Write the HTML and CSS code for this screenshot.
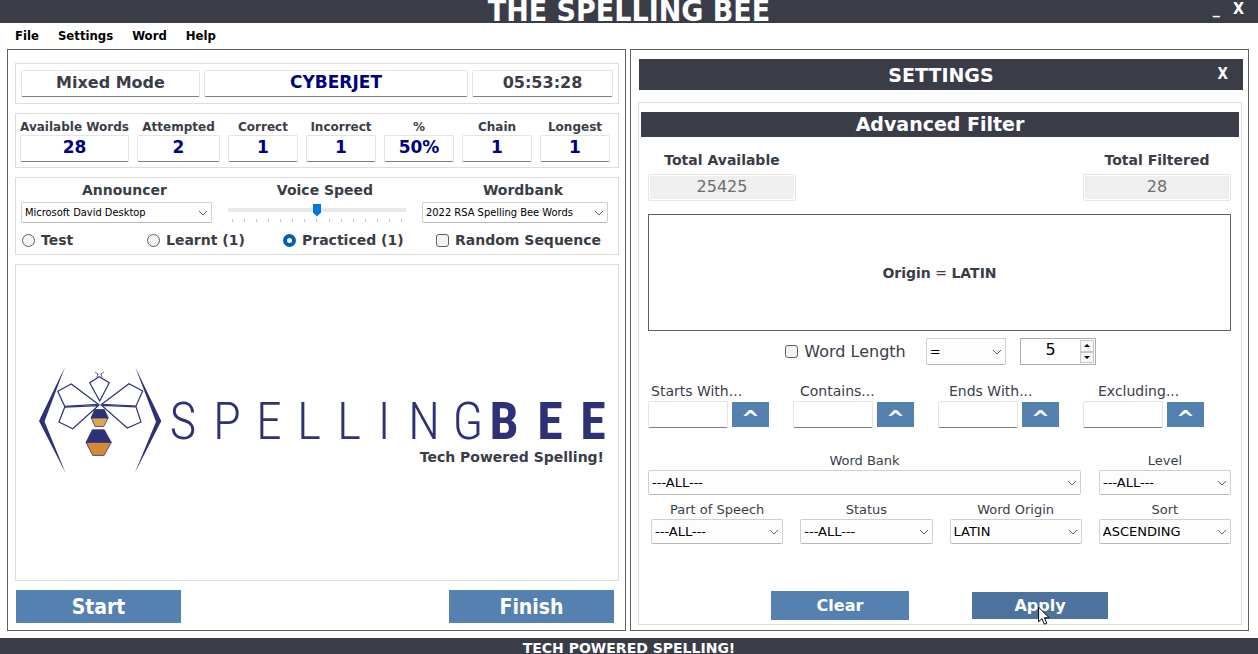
FILE: index.html
```html
<!DOCTYPE html>
<html lang="en">
<head>
<meta charset="utf-8">
<title>The Spelling Bee</title>
<link rel="stylesheet" href="styles.css">
</head>
<body>
<header class="titlebar">
  <h1 class="titlebar-title">THE SPELLING BEE</h1>
  <div class="window-buttons">
    <button type="button" class="window-button" aria-label="Minimize">_</button>
    <button type="button" class="window-button" aria-label="Close">X</button>
  </div>
</header>
<nav class="menu">
  <button type="button" class="menu-item">File</button>
  <button type="button" class="menu-item">Settings</button>
  <button type="button" class="menu-item">Word</button>
  <button type="button" class="menu-item">Help</button>
</nav>
<main class="panels">
  <section class="panel game">
    <div class="group status">
      <input class="field dark" type="text" readonly value="Mixed Mode" aria-label="Mode">
      <input class="field" type="text" readonly value="CYBERJET" aria-label="Player">
      <input class="field dark" type="text" readonly value="05:53:28" aria-label="Time">
    </div>
    <div class="group scores">
      <label class="score">Available Words<input class="field" type="text" readonly value="28"></label>
      <label class="score">Attempted<input class="field" type="text" readonly value="2"></label>
      <label class="score">Correct<input class="field" type="text" readonly value="1"></label>
      <label class="score">Incorrect<input class="field" type="text" readonly value="1"></label>
      <label class="score">%<input class="field" type="text" readonly value="50%"></label>
      <label class="score">Chain<input class="field" type="text" readonly value="1"></label>
      <label class="score">Longest<input class="field" type="text" readonly value="1"></label>
    </div>
    <div class="group voice">
      <div class="voice-row">
        <div class="voice-item">
          <label for="announcer">Announcer</label>
          <select id="announcer" class="select small"><option>Microsoft David Desktop</option></select>
        </div>
        <div class="voice-item">
          <label for="speed">Voice Speed</label>
          <div class="slider">
            <input id="speed" type="range" min="-7" max="7" value="0">
            <div class="ticks"><i></i><i></i><i></i><i></i><i></i><i></i><i></i><i></i><i></i><i></i><i></i><i></i><i></i><i></i><i></i></div>
          </div>
        </div>
        <div class="voice-item">
          <label for="wordbank">Wordbank</label>
          <select id="wordbank" class="select small"><option>2022 RSA Spelling Bee Words</option></select>
        </div>
      </div>
      <div class="mode-row">
        <label class="choice"><input type="radio" name="mode">Test</label>
        <label class="choice"><input type="radio" name="mode">Learnt (1)</label>
        <label class="choice"><input type="radio" name="mode" checked>Practiced (1)</label>
        <label class="choice"><input type="checkbox">Random Sequence</label>
      </div>
    </div>
    <div class="group logo-card">
      <svg class="logo" viewBox="16 365 602 115" role="img" aria-label="Spelling Bee">
        <g fill="#2e3175">
          <path d="M65 366.7 39 421l26.7 52.3L44.5 421.5z"/>
          <path d="M135.3 367.3 161.3 421l-26.6 52.3L156 421.7z"/>
        </g>
        <g fill="none" stroke="#2e3175" stroke-width="1.2">
          <path d="M98.3 404.3 71.3 384l-13.6 7.3 7 15z"/>
          <path d="M98.3 405.6 64.7 407.2 59 422l13.7 6.7z"/>
          <path d="M101.7 404.3 129 383.7l13.7 7.3-6.7 15z"/>
          <path d="M101.7 405.4 136 406.8l5 15.2-13.7 6z"/>
          <path d="M99.7 401 89.7 382.7l9.6-6 10 6z"/>
          <path d="M95 372l3 2-1.2 3.2M103.8 372l-3 2 1.4 3.2" stroke-width=".8"/>
        </g>
        <g stroke="#2e3175" stroke-width=".8">
          <path fill="#2e3175" d="M94.7 409.5h9.6l4 8.5H91z"/>
          <path fill="#dda64c" d="M91.3 418h16.8l-4.4 8.5H95z"/>
          <path fill="#2e3175" d="M92.3 429.8h12l7 12.6H86z"/>
          <path fill="#d48a35" d="M86 442.4h25.3l-7.3 13H92.7z"/>
        </g>
        <text class="logo-thin" y="439" x="183 227 269 309 349 384 424 468">SPELLING</text>
        <text class="logo-bold" y="439" x="504 550 593">BEE</text>
        <text class="logo-tag" x="604" y="462">Tech Powered Spelling!</text>
      </svg>
    </div>
    <div class="actions">
      <button type="button" class="button big">Start</button>
      <button type="button" class="button big">Finish</button>
    </div>
  </section>

  <section class="panel settings">
    <div class="settings-head">
      <h2 class="settings-title">SETTINGS</h2>
      <button type="button" class="settings-close" aria-label="Close settings">X</button>
    </div>
    <form class="group filter">
      <h3 class="filter-title">Advanced Filter</h3>
      <div class="filter-body">
        <div class="totals">
          <label class="total">Total Available<input type="text" disabled value="25425"></label>
          <label class="total">Total Filtered<input type="text" disabled value="28"></label>
        </div>
        <div class="query"><p><b>Origin</b> = <b>LATIN</b></p></div>
        <div class="length-row">
          <label class="choice light"><input type="checkbox">Word Length</label>
          <select class="select operator" aria-label="Comparison"><option>=</option></select>
          <div class="spinner">
            <input type="text" inputmode="numeric" value="5" aria-label="Length">
            <div class="spinner-buttons">
              <button type="button" aria-label="Increase"><svg viewBox="0 0 6 3"><path d="M0 3 3 0l3 3z"/></svg></button>
              <button type="button" aria-label="Decrease"><svg viewBox="0 0 6 3"><path d="M0 0h6L3 3z"/></svg></button>
            </div>
          </div>
        </div>
        <div class="match-labels">
          <label for="starts">Starts With...</label>
          <label for="contains">Contains...</label>
          <label for="ends">Ends With...</label>
          <label for="excluding">Excluding...</label>
        </div>
        <div class="match-fields">
          <div class="match"><input id="starts" class="field" type="text"><button type="button" class="button caret" aria-label="Add starts with">^</button></div>
          <div class="match"><input id="contains" class="field" type="text"><button type="button" class="button caret" aria-label="Add contains">^</button></div>
          <div class="match"><input id="ends" class="field" type="text"><button type="button" class="button caret" aria-label="Add ends with">^</button></div>
          <div class="match"><input id="excluding" class="field" type="text"><button type="button" class="button caret" aria-label="Add excluding">^</button></div>
        </div>
        <div class="bank-row">
          <label class="pick">Word Bank<select class="select"><option>---ALL---</option></select></label>
          <label class="pick">Level<select class="select"><option>---ALL---</option></select></label>
        </div>
        <div class="pick-row">
          <label class="pick">Part of Speech<select class="select"><option>---ALL---</option></select></label>
          <label class="pick">Status<select class="select"><option>---ALL---</option></select></label>
          <label class="pick">Word Origin<select class="select"><option>LATIN</option></select></label>
          <label class="pick">Sort<select class="select"><option>ASCENDING</option></select></label>
        </div>
        <div class="filter-actions">
          <button type="button" class="button clear">Clear</button>
          <button type="button" class="button apply">Apply
            <svg class="pointer" viewBox="0 0 12 19" aria-hidden="true"><path d="M.6 1.2v14.6l3.3-3.2 2.5 5.6 2.4-1-2.4-5.4h4.8z" fill="#fff" stroke="#000"/></svg>
          </button>
        </div>
      </div>
    </form>
  </section>
</main>
<footer class="footer">TECH POWERED SPELLING!</footer>
</body>
</html>
```
FILE: styles.css
```css
:root {
  --ink: #3a3d48;
  --navy: #000080;
  --blue: #5581b1;
  --line: #dcdcdc;
  --wide: "DejaVu Sans", Verdana, sans-serif;
  --narrow: "DejaVu Sans Condensed", Tahoma, "Noto Sans", sans-serif;
}
* { box-sizing: border-box; }
body {
  margin: 0;
  height: 100vh;
  display: flex;
  flex-direction: column;
  overflow: hidden;
  background: #fff;
  color: var(--ink);
  font: 13px/16px var(--wide);
}
h1, h2, h3, p { margin: 0; }
button, input, select { font: inherit; color: inherit; margin: 0; padding: 0; }
button { border: 0; background: none; }

.titlebar {
  flex: none;
  position: relative;
  display: flex;
  align-items: center;
  justify-content: center;
  height: 23px;
  background: var(--ink);
  color: #fff;
}
.titlebar-title { font: bold 30px/20px var(--narrow); padding-bottom: 2px; }
.window-buttons { position: absolute; right: 14px; top: 0; display: flex; gap: 13px; }
.window-button { font: bold 16px/18px var(--narrow); }

.menu { flex: none; display: flex; gap: 19px; height: 26px; padding: 0 15px; }
.menu-item { font: bold 13px/24px var(--narrow); color: #000; }

.panels {
  flex: 1;
  min-height: 0;
  display: grid;
  grid-template-columns: 1fr 1fr;
  gap: 4px;
  padding: 0 9px 7px 7px;
}
.panel { display: flex; flex-direction: column; min-height: 0; border: 1px solid #606060; }
.group { border: 1px solid var(--line); }

.game { padding: 13px 6px 7px 7px; gap: 9px; }
.field {
  display: block;
  width: 100%;
  min-width: 0;
  height: 27px;
  padding-bottom: 3px;
  border: 1px solid #e4e4e4;
  border-bottom-color: #808080;
  border-radius: 2px;
  background: #fff;
  color: var(--navy);
  font: bold 17px/20px var(--wide);
  text-align: center;
}
.field.dark { color: var(--ink); font-size: 16px; }
.status {
  display: grid;
  grid-template-columns: 179fr 264fr 141fr;
  gap: 4px;
  padding: 6px 5px;
}
.scores {
  display: grid;
  grid-template-columns: 109fr 83fr 70fr 70fr 70fr 70fr 70fr;
  gap: 8px;
  padding: 5px 8px 5px 4px;
}
.score {
  display: flex;
  flex-direction: column;
  align-items: center;
  min-width: 0;
  font: bold 12px/16px var(--wide);
  white-space: nowrap;
}
.voice { padding: 4px 10px 5px 5px; }
.voice-row { display: grid; grid-template-columns: 191fr 178fr 186fr; gap: 16px; }
.voice-item { display: flex; flex-direction: column; align-items: center; gap: 4px; font: bold 14px/16px var(--wide); }
.voice-item label { padding-left: 16px; }
.slider { width: 100%; }
.slider input {
  appearance: none;
  display: block;
  width: 100%;
  height: 16px;
  background: linear-gradient(#e7eaea, #e7eaea) center / 100% 4px no-repeat;
}
.slider input::-webkit-slider-thumb {
  appearance: none;
  width: 8px;
  height: 13px;
  background: #0078d7;
  clip-path: polygon(0 0, 100% 0, 100% 70%, 50% 100%, 0 70%);
}
.ticks { display: flex; justify-content: space-between; padding: 1px 4px 0; }
.ticks i { width: 1px; height: 3px; background: #c4c4c4; }

.select {
  appearance: none;
  display: block;
  width: 100%;
  height: 25px;
  padding: 0 20px 0 3px;
  border: 1px solid #d0d0d0;
  border-bottom-color: #b8b8b8;
  border-radius: 2px;
  background: #fdfdfd url("data:image/svg+xml,%3Csvg xmlns='http://www.w3.org/2000/svg' width='10' height='6'%3E%3Cpath d='M1 1l4 4 4-4' fill='none' stroke='%23606060'/%3E%3C/svg%3E") right 3px center no-repeat;
  color: #000;
  font: 13px/18px var(--wide);
}
.select.small { height: 21px; font: 11px/16px var(--narrow); }

.mode-row { display: grid; grid-template-columns: 125fr 136fr 153fr 172fr; padding: 8px 0 0 1px; }
.choice { display: flex; align-items: center; gap: 6px; font: bold 14px/18px var(--wide); white-space: nowrap; }
.choice input {
  appearance: none;
  flex: none;
  width: 13px;
  height: 13px;
  border: 1px solid #606060;
  border-radius: 3px;
  background: #f3f3f3;
}
.choice input[type="radio"] { border-radius: 50%; }
.choice input[type="radio"]:checked { border: 4px solid #005fb8; background: #fff; }
.choice.light { font: 16px/20px var(--wide); }

.logo-card { flex: 1; display: flex; align-items: center; min-height: 0; }
.logo { display: block; width: 100%; }
.logo-thin, .logo-bold { font-family: "Roboto Condensed", Roboto, sans-serif; font-size: 52px; fill: #2e3175; text-anchor: middle; }
.logo-thin { font-weight: 300; }
.logo-bold { font-weight: 700; }
.logo-tag { font: bold 14px var(--wide); fill: var(--ink); text-anchor: end; }

.actions { display: flex; justify-content: space-between; padding: 0 5px 0 1px; }
.button { background: var(--blue); color: #fff; font-weight: bold; }
.big { width: 165px; height: 33px; font: bold 21px/24px var(--narrow); }

.settings { padding: 9px 5px 5px 7px; gap: 12px; }
.settings-head {
  flex: none;
  position: relative;
  display: flex;
  align-items: center;
  justify-content: center;
  height: 31px;
  margin-left: 1px;
  background: var(--ink);
  color: #fff;
}
.settings-title { font: bold 19px/24px var(--wide); }
.settings-close { position: absolute; right: 15px; top: 6px; font: bold 15px/18px var(--narrow); }
.filter { flex: 1; min-height: 0; padding: 9px 2px 4px; margin-right: 1px; }
.filter-title { font: bold 19px/25px var(--wide); background: var(--ink); color: #fff; text-align: center; }
.filter-body { padding: 15px 8px 0 7px; }
.totals { display: flex; justify-content: space-between; }
.total { display: flex; flex-direction: column; gap: 6px; width: 148px; font: bold 14px/16px var(--wide); text-align: center; }
.total input {
  width: 100%;
  height: 27px;
  padding-bottom: 3px;
  border: 1px solid #e6e6e6;
  border-radius: 2px;
  box-shadow: inset 0 0 0 1px #fff;
  background: #efefef;
  color: #6d6d6d;
  font: 16px/20px var(--wide);
  text-align: center;
}
.query {
  display: flex;
  align-items: center;
  justify-content: center;
  height: 117px;
  margin-top: 13px;
  border: 1px solid #606060;
  font-size: 14px;
}
.length-row { display: flex; align-items: center; justify-content: center; padding: 7px 0 0 2px; }
.operator { width: 80px; height: 27px; margin: 0 14px 0 20px; }
.spinner { display: flex; width: 76px; height: 27px; padding: 1px; border: 1px solid #ababb3; }
.spinner input { flex: 1; min-width: 0; border: 0; padding-bottom: 3px; color: #000; font: 16px/20px var(--wide); text-align: center; }
.spinner-buttons { display: flex; flex-direction: column; }
.spinner-buttons button {
  flex: 1;
  display: flex;
  align-items: center;
  justify-content: center;
  width: 14px;
  border: 1px solid #c8c8c8;
  background: #f7f7f7;
}
.spinner-buttons svg { width: 6px; height: 3px; }
.match-labels { display: grid; grid-template-columns: repeat(4, 1fr); margin-right: -16px; padding: 18px 0 2px 3px; font-size: 14px; }
.match-fields { display: flex; justify-content: space-between; padding-right: 27px; }
.match { display: flex; align-items: center; gap: 4px; }
.match .field { width: 80px; }
.caret { width: 37px; height: 25px; padding-top: 9px; font: bold 22px/16px var(--wide); }
.bank-row { display: grid; grid-template-columns: 433fr 132fr; gap: 18px; padding-top: 25px; }
.pick-row { display: grid; grid-template-columns: repeat(4, 1fr); gap: 17px; padding: 7px 0 0 3px; }
.pick { display: flex; flex-direction: column; align-items: center; gap: 1px; }
.filter-actions { display: flex; align-items: center; justify-content: center; gap: 63px; padding-top: 47px; }
.filter-actions .button { font: bold 16px/20px var(--wide); }
.clear { width: 138px; height: 29px; }
.filter-actions .apply { position: relative; width: 136px; height: 27px; background: #4c739e; }
.pointer { position: absolute; left: 66px; top: 14px; width: 12px; height: 19px; }

.footer { flex: none; height: 16px; padding-top: 2px; background: var(--ink); color: #fff; font: bold 14px/16px var(--wide); text-align: center; }
```
